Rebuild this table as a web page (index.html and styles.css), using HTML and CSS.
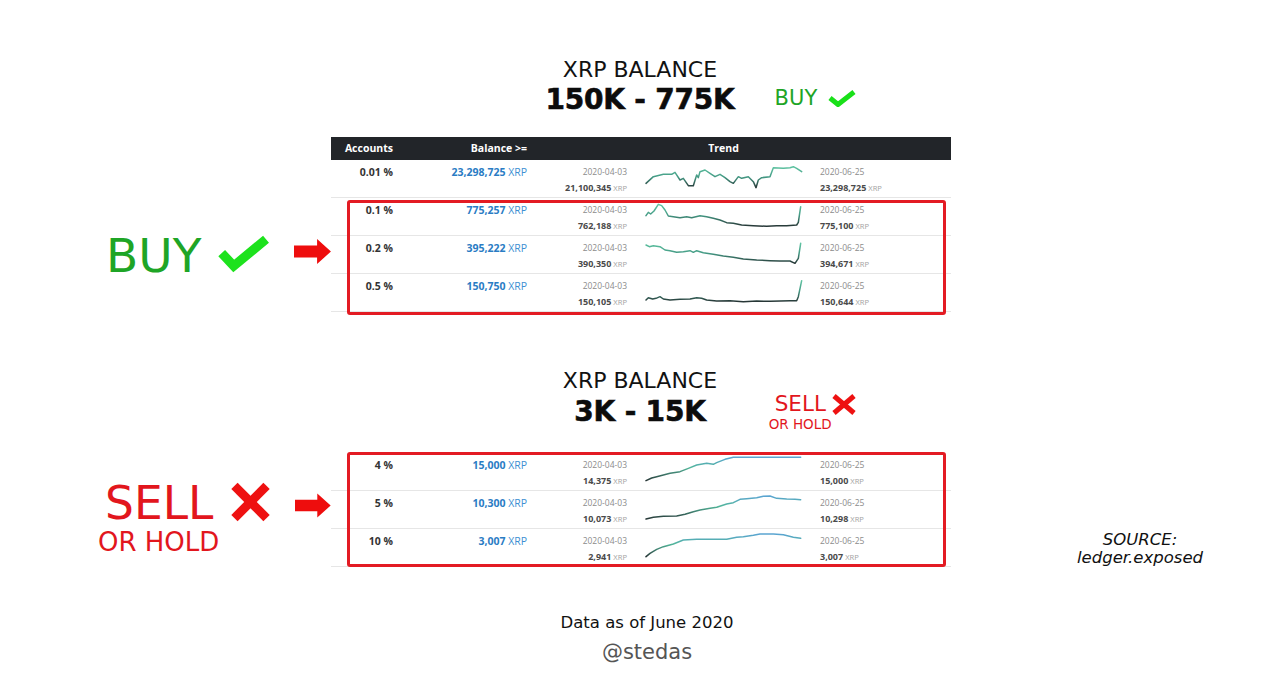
FILE: index.html
```html
<!DOCTYPE html>
<html lang="en">
<head>
<meta charset="utf-8">
<title>XRP Balance – ledger.exposed</title>
<link rel="stylesheet" href="styles.css">
</head>
<body>
<svg class="defs" width="0" height="0" aria-hidden="true">
  <defs>
    <linearGradient id="trend-a" x1="0" y1="0" x2="0" y2="1">
      <stop offset="0" stop-color="#5fc4a2"/>
      <stop offset="0.5" stop-color="#449984"/>
      <stop offset="1" stop-color="#263535"/>
    </linearGradient>
    <linearGradient id="trend-b" x1="0" y1="0" x2="0" y2="1">
      <stop offset="0" stop-color="#5aa4d2"/>
      <stop offset="0.45" stop-color="#52b69a"/>
      <stop offset="1" stop-color="#263535"/>
    </linearGradient>
  </defs>
</svg>
<main class="page">
  <header class="heading">
    <div class="kicker">XRP BALANCE</div>
    <div class="range-row">
      <span class="range">150K - 775K</span>
      <span class="verdict verdict-buy">BUY<svg class="tick-sm" viewBox="0 0 28 17" width="28" height="17"><polyline points="2,8 10,14.5 26,2"/></svg></span>
    </div>
  </header>

  <section class="band band-buy">
    <div class="side side-buy">
      <div class="label-row">
        <span class="big buy-text">BUY</span>
        <svg class="tick-lg" viewBox="0 0 56 42" width="56" height="42"><polyline points="4,20 17,34 52,5"/></svg>
        <svg class="arrow arrow-buy" viewBox="0 0 40 27" width="40" height="27"><polygon points="0,7 25,7 25,0 40,13.5 25,27 25,20 0,20"/></svg>
      </div>
    </div>
    <div class="sheet sheet-buy">
      <div class="thead">
        <span class="c-acc">Accounts</span>
        <span class="c-bal">Balance &gt;=</span>
        <span class="c-from"></span>
        <span class="c-trend">Trend</span>
        <span class="c-to"></span>
      </div>
      <div class="row">
        <div class="c-acc pct">0.01 %</div>
        <div class="c-bal bal"><b>23,298,725</b> XRP</div>
        <div class="c-from"><div class="date">2020-04-03</div><div class="amt"><b>21,100,345</b> XRP</div></div>
        <div class="c-trend"><svg class="spark" viewBox="45 75 480 111" preserveAspectRatio="none"><polyline points="48,145 70,125 100,118 125,118 135,112 150,135 160,130 175,152 190,152 200,120 205,128 210,110 225,105 240,115 255,125 270,118 285,128 300,140 310,145 325,125 335,130 355,125 370,140 378,158 385,135 395,128 420,125 430,98 460,100 480,98 490,95 500,100 515,110"/></svg></div>
        <div class="c-to"><div class="date">2020-06-25</div><div class="amt"><b>23,298,725</b> XRP</div></div>
      </div>
      <div class="flagged flagged-buy">
        <div class="row">
          <div class="c-acc pct">0.1 %</div>
          <div class="c-bal bal"><b>775,257</b> XRP</div>
          <div class="c-from"><div class="date">2020-04-03</div><div class="amt"><b>762,188</b> XRP</div></div>
          <div class="c-trend"><svg class="spark" viewBox="45 189 480 111" preserveAspectRatio="none"><polyline points="48,242 55,232 62,237 72,228 85,208 95,212 105,225 115,243 130,245 150,248 170,245 185,248 210,242 230,245 250,250 270,255 290,263 310,265 335,270 370,272 410,274 440,272 470,272 500,270 505,262 512,215"/></svg></div>
          <div class="c-to"><div class="date">2020-06-25</div><div class="amt"><b>775,100</b> XRP</div></div>
        </div>
        <div class="row">
          <div class="c-acc pct">0.2 %</div>
          <div class="c-bal bal"><b>395,222</b> XRP</div>
          <div class="c-from"><div class="date">2020-04-03</div><div class="amt"><b>390,350</b> XRP</div></div>
          <div class="c-trend"><svg class="spark" viewBox="45 303 480 111" preserveAspectRatio="none"><polyline points="48,330 58,335 70,332 90,335 105,345 120,347 140,352 160,350 180,347 190,352 200,347 220,353 250,358 280,363 310,367 340,372 380,375 420,377 450,378 480,378 495,385 505,370 512,325"/></svg></div>
          <div class="c-to"><div class="date">2020-06-25</div><div class="amt"><b>394,671</b> XRP</div></div>
        </div>
        <div class="row">
          <div class="c-acc pct">0.5 %</div>
          <div class="c-bal bal"><b>150,750</b> XRP</div>
          <div class="c-from"><div class="date">2020-04-03</div><div class="amt"><b>150,105</b> XRP</div></div>
          <div class="c-trend"><svg class="spark" viewBox="45 417 480 111" preserveAspectRatio="none"><polyline points="48,495 55,488 68,492 78,490 90,485 100,492 120,495 150,493 180,492 200,488 215,490 230,495 260,498 300,497 340,500 380,498 420,499 450,498 480,497 500,497 505,485 515,437"/></svg></div>
          <div class="c-to"><div class="date">2020-06-25</div><div class="amt"><b>150,644</b> XRP</div></div>
        </div>
      </div>
    </div>
    <div class="aside"></div>
  </section>

  <header class="heading heading-sell">
    <div class="kicker">XRP BALANCE</div>
    <div class="range-row">
      <span class="range">3K - 15K</span>
      <span class="verdict verdict-sell">
        <span class="verdict-line">SELL<svg class="cross-sm" viewBox="0 0 26 21" width="26" height="21"><line x1="3" y1="2" x2="23" y2="19"/><line x1="23" y1="2" x2="3" y2="19"/></svg></span>
        <span class="verdict-sub">OR HOLD</span>
      </span>
    </div>
  </header>

  <section class="band band-sell">
    <div class="side side-sell">
      <div class="label-row">
        <span class="big sell-text">SELL</span>
        <svg class="cross-lg" viewBox="0 0 46 44" width="46" height="44"><line x1="5" y1="4" x2="41" y2="40"/><line x1="41" y1="4" x2="5" y2="40"/></svg>
        <svg class="arrow arrow-sell" viewBox="0 0 40 27" width="40" height="25"><polygon points="0,7 25,7 25,0 40,13.5 25,27 25,20 0,20"/></svg>
      </div>
      <div class="hold">OR HOLD</div>
    </div>
    <div class="sheet sheet-sell">
      <div class="flagged flagged-sell">
        <div class="row">
          <div class="c-acc pct">4 %</div>
          <div class="c-bal bal"><b>15,000</b> XRP</div>
          <div class="c-from"><div class="date">2020-04-03</div><div class="amt"><b>14,375</b> XRP</div></div>
          <div class="c-trend"><svg class="spark" viewBox="45 9 480 111" preserveAspectRatio="none"><polyline points="48,92 65,84 80,80 100,75 120,70 150,65 175,55 200,45 230,40 250,43 260,38 285,28 310,22 400,22 512,22"/></svg></div>
          <div class="c-to"><div class="date">2020-06-25</div><div class="amt"><b>15,000</b> XRP</div></div>
        </div>
        <div class="row">
          <div class="c-acc pct">5 %</div>
          <div class="c-bal bal"><b>10,300</b> XRP</div>
          <div class="c-from"><div class="date">2020-04-03</div><div class="amt"><b>10,073</b> XRP</div></div>
          <div class="c-trend"><svg class="spark" viewBox="45 123 480 111" preserveAspectRatio="none"><polyline points="48,207 70,202 100,199 140,198 165,193 190,185 210,180 240,175 260,172 290,162 310,158 330,148 350,146 380,143 400,139 420,138 440,145 470,147 495,148 512,149"/></svg></div>
          <div class="c-to"><div class="date">2020-06-25</div><div class="amt"><b>10,298</b> XRP</div></div>
        </div>
        <div class="row">
          <div class="c-acc pct">10 %</div>
          <div class="c-bal bal"><b>3,007</b> XRP</div>
          <div class="c-from"><div class="date">2020-04-03</div><div class="amt"><b>2,941</b> XRP</div></div>
          <div class="c-trend"><svg class="spark" viewBox="45 237 480 111" preserveAspectRatio="none"><polyline points="48,320 60,310 80,298 100,290 130,282 160,270 200,268 260,268 290,268 320,262 340,260 370,256 390,252 430,252 460,254 490,262 512,265"/></svg></div>
          <div class="c-to"><div class="date">2020-06-25</div><div class="amt"><b>3,007</b> XRP</div></div>
        </div>
      </div>
    </div>
    <div class="aside">
      <div class="source">SOURCE:<br>ledger.exposed</div>
    </div>
  </section>

  <footer class="footer">
    <div class="asof">Data as of June 2020</div>
    <div class="handle">@stedas</div>
  </footer>
</main>
</body>
</html>
```

FILE: styles.css
```css
* {
  box-sizing: border-box;
  margin: 0;
  padding: 0;
}

html, body {
  background: #ffffff;
}

body {
  font-family: "DejaVu Sans", "Noto Sans", sans-serif;
  color: #111111;
}

.defs {
  position: absolute;
  width: 0;
  height: 0;
  overflow: hidden;
}

.page {
  width: 1280px;
  height: 693px;
  padding-top: 57px;
  overflow: hidden;
}

/* ---------- headings ---------- */
.heading {
  display: flex;
  flex-direction: column;
  align-items: center;
}

.heading-sell {
  margin-top: 56px;
}

.kicker {
  font-size: 22px;
  line-height: 26px;
  color: #121212;
}

.range-row {
  display: grid;
  grid-template-columns: 1fr auto 1fr;
  align-items: start;
  width: 100%;
  margin-top: 1px;
}

.heading-sell .range-row {
  margin-top: 2px;
}

.range {
  grid-column: 2;
  font-weight: bold;
  font-size: 28px;
  line-height: 32px;
  color: #0c0c0c;
  letter-spacing: -0.2px;
  -webkit-text-stroke: 0.6px #0c0c0c;
}

.verdict {
  grid-column: 3;
  justify-self: start;
}

.verdict-buy {
  display: flex;
  align-items: center;
  gap: 11px;
  margin-left: 40px;
  margin-top: 2px;
  font-size: 21px;
  line-height: 24px;
  color: #1ea526;
}

.tick-sm polyline {
  fill: none;
  stroke: #19e019;
  stroke-width: 5;
}

.verdict-sell {
  display: flex;
  flex-direction: column;
  align-items: flex-start;
  margin-left: 69px;
  margin-top: -4px;
  height: 32px;
  color: #e2161d;
}

.verdict-line {
  display: flex;
  align-items: center;
  gap: 5px;
  font-size: 21.5px;
  line-height: 24px;
}

.cross-sm line {
  stroke: #ee1111;
  stroke-width: 5;
}

.verdict-sub {
  font-size: 13.5px;
  line-height: 14px;
  margin-top: 1px;
  margin-left: -6px;
}

/* ---------- bands ---------- */
.band {
  display: grid;
  grid-template-columns: 331px 620px 1fr;
}

.band-buy {
  margin-top: 21px;
}

.band-sell {
  margin-top: 25px;
}

.side {
  padding-left: 105px;
}

.side-buy {
  padding-top: 96px;
  padding-left: 106px;
}

.side-sell {
  padding-top: 28px;
}

.label-row {
  display: flex;
  align-items: flex-start;
}

.big {
  font-size: 47px;
  line-height: 46px;
}

.buy-text {
  color: #1ea526;
}

.tick-lg {
  margin-left: 17px;
}

.tick-lg polyline {
  fill: none;
  stroke: #1de21d;
  stroke-width: 10;
}

.arrow polygon {
  fill: #ee0d0d;
}

.arrow-buy {
  margin-left: 24px;
  margin-top: 5px;
}

.sell-text {
  font-size: 45.5px;
  line-height: 45px;
  color: #e2161d;
}

.cross-lg {
  margin-left: 17px;
  margin-top: -1px;
}

.cross-lg line {
  stroke: #ee1111;
  stroke-width: 10;
}

.arrow-sell {
  margin-left: 24px;
  margin-top: 12px;
}

.hold {
  margin-top: 3px;
  margin-left: -7px;
  font-size: 26px;
  line-height: 26px;
  color: #e2161d;
}

/* ---------- table ---------- */
.sheet {
  font-family: "Open Sans", "Noto Sans", sans-serif;
}

.thead,
.row {
  display: grid;
  grid-template-columns: 69px 135px 100px 177px 1fr;
}

.thead {
  height: 23px;
  background: #222529;
  color: #ffffff;
  font-weight: bold;
  font-size: 10.5px;
  line-height: 23px;
}

.thead .c-trend {
  text-align: center;
  padding-left: 0;
}

.row {
  height: 38px;
  border-bottom: 1px solid #e6e6e6;
}

.c-acc {
  text-align: right;
  padding-right: 7px;
}

.c-bal {
  text-align: right;
  padding-right: 8px;
}

.c-from {
  text-align: right;
  padding-right: 8px;
}

.c-trend {
  padding-left: 10px;
}

.c-to {
  padding-left: 8px;
}

.row > div {
  padding-top: 4px;
  line-height: 16px;
}

.row > .c-trend {
  padding-top: 0;
}

.pct {
  font-size: 10.5px;
  font-weight: bold;
  color: #333333;
}

.bal {
  font-size: 10.5px;
  color: #3d8fd2;
}

.bal b {
  color: #2a7cc4;
}

.date {
  font-size: 8.5px;
  color: #8c8c8c;
}

.amt {
  font-size: 7.6px;
  color: #a3a3a3;
}

.amt b {
  font-size: 9px;
  color: #4a4a4a;
}

.spark {
  display: block;
  width: 160px;
  height: 37px;
}

.spark polyline {
  fill: none;
  stroke-width: 4.5;
  stroke-linejoin: round;
  stroke-linecap: round;
}

.sheet-buy .spark polyline {
  stroke: url(#trend-a);
}

.sheet-sell .spark polyline {
  stroke: url(#trend-b);
}

.flagged {
  position: relative;
}

.flagged::after {
  content: "";
  position: absolute;
  left: 16px;
  right: 5px;
  border: 3px solid #e31b23;
  border-radius: 3px;
  pointer-events: none;
}

.flagged-buy::after {
  top: 2px;
  bottom: -3px;
}

.flagged-sell::after {
  top: -1px;
  bottom: 0;
}

/* ---------- aside ---------- */
.aside {
  display: flex;
  align-items: flex-start;
  padding-left: 126px;
}

.source {
  padding-top: 78px;
  text-align: center;
  font-style: italic;
  font-size: 16.5px;
  line-height: 18px;
  color: #111111;
}

/* ---------- footer ---------- */
.footer {
  margin-top: 46px;
  display: flex;
  flex-direction: column;
  align-items: center;
  padding-left: 14px;
}

.asof {
  font-size: 16.5px;
  line-height: 20px;
  color: #111111;
}

.handle {
  margin-top: 6px;
  font-size: 21px;
  line-height: 26px;
  color: #555555;
}
```
